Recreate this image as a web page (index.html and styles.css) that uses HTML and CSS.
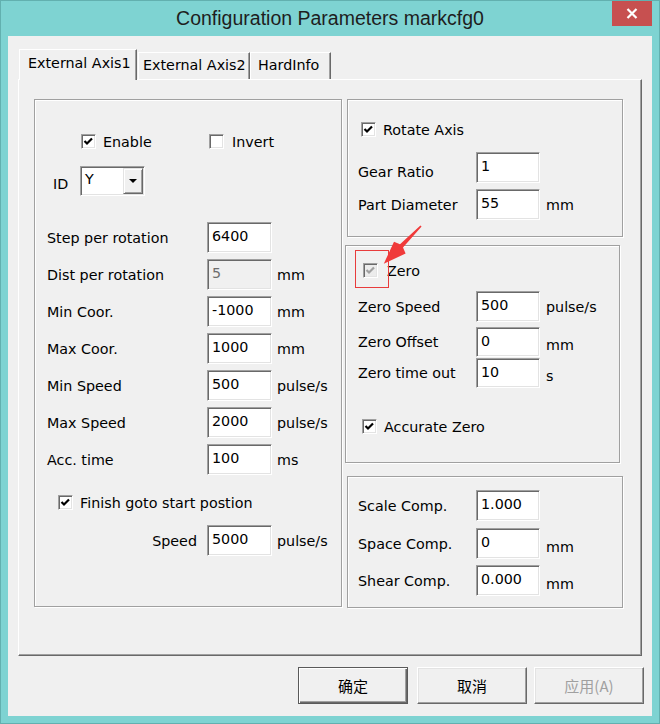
FILE: index.html
```html
<!DOCTYPE html>
<html>
<head>
<meta charset="utf-8">
<title>Configuration Parameters markcfg0</title>
<link rel="stylesheet" href="styles.css">
</head>
<body>
<div class="window">
  <div class="titlebar">
    <div class="title">Configuration Parameters markcfg0</div>
    <div class="close"><svg width="12" height="11" viewBox="0 0 12 11"><path d="M1.5 1 L10.5 10 M10.5 1 L1.5 10" stroke="#fff" stroke-width="2.2" fill="none"/></svg></div>
  </div>
  <div class="client">
    <div class="tabs">
      <div class="tab sel">External Axis1</div>
      <div class="tab t2">External Axis2</div>
      <div class="tab t3">HardInfo</div>
    </div>
    <div class="panel">
      <div class="group gleft">
        <div class="cbline">
          <div class="check w128"><span class="cb"><svg width="13" height="13" viewBox="0 0 13 13"><path d="M2.5 6 L5 8.5 L10 3.5" stroke="#000" stroke-width="2.2" fill="none"/></svg></span><span>Enable</span></div>
          <div class="check gap8"><span class="cb"></span><span>Invert</span></div>
        </div>
        <div class="idrow">
          <span class="idlbl">ID</span>
          <div class="combo"><span class="combo-val">Y</span><span class="combo-btn"><span class="tri"></span></span></div>
        </div>
        <div class="fields lf">
          <div class="row"><span class="lbl">Step per rotation</span><span class="edit">6400</span></div>
          <div class="row"><span class="lbl">Dist per rotation</span><span class="edit dis">5</span><span class="unit">mm</span></div>
          <div class="row"><span class="lbl">Min Coor.</span><span class="edit">-1000</span><span class="unit">mm</span></div>
          <div class="row"><span class="lbl">Max Coor.</span><span class="edit">1000</span><span class="unit">mm</span></div>
          <div class="row"><span class="lbl">Min Speed</span><span class="edit">500</span><span class="unit">pulse/s</span></div>
          <div class="row"><span class="lbl">Max Speed</span><span class="edit">2000</span><span class="unit">pulse/s</span></div>
          <div class="row"><span class="lbl">Acc. time</span><span class="edit">100</span><span class="unit">ms</span></div>
        </div>
        <div class="check finish"><span class="cb"><svg width="13" height="13" viewBox="0 0 13 13"><path d="M2.5 6 L5 8.5 L10 3.5" stroke="#000" stroke-width="2.2" fill="none"/></svg></span><span>Finish goto start postion</span></div>
        <div class="row speedrow"><span class="lbl">Speed</span><span class="edit">5000</span><span class="unit">pulse/s</span></div>
      </div>
      <div class="rightcol">
        <div class="group g1">
          <div class="check rot"><span class="cb"><svg width="13" height="13" viewBox="0 0 13 13"><path d="M2.5 6 L5 8.5 L10 3.5" stroke="#000" stroke-width="2.2" fill="none"/></svg></span><span>Rotate Axis</span></div>
          <div class="fields rf g1f">
            <div class="row"><span class="lbl gear">Gear Ratio</span><span class="edit">1</span></div>
            <div class="row"><span class="lbl">Part Diameter</span><span class="edit">55</span><span class="unit">mm</span></div>
          </div>
        </div>
        <div class="group g2">
          <div class="check zero"><span class="cb dis"><svg width="13" height="13" viewBox="0 0 13 13"><path d="M2.5 6 L5 8.5 L10 3.5" stroke="#a0a0a0" stroke-width="2.2" fill="none"/></svg></span><span>Zero</span></div>
          <div class="rf g2f">
            <div class="row"><span class="lbl">Zero Speed</span><span class="edit">500</span><span class="unit">pulse/s</span></div>
            <div class="row h30 mt5"><span class="lbl">Zero Offset</span><span class="edit">0</span><span class="unit low">mm</span></div>
            <div class="row h30 mt1"><span class="lbl">Zero time out</span><span class="edit">10</span><span class="unit low">s</span></div>
          </div>
          <div class="check acc"><span class="cb"><svg width="13" height="13" viewBox="0 0 13 13"><path d="M2.5 6 L5 8.5 L10 3.5" stroke="#000" stroke-width="2.2" fill="none"/></svg></span><span>Accurate Zero</span></div>
        </div>
        <div class="group g3">
          <div class="rf g3f">
            <div class="row"><span class="lbl">Scale Comp.</span><span class="edit">1.000</span></div>
            <div class="row mt7"><span class="lbl">Space Comp.</span><span class="edit">0</span><span class="unit low">mm</span></div>
            <div class="row mt6"><span class="lbl">Shear Comp.</span><span class="edit">0.000</span><span class="unit low">mm</span></div>
          </div>
        </div>
      </div>
    </div>
    <div class="buttons">
      <div class="btn default">确定</div>
      <div class="btn b2">取消</div>
      <div class="btn b3 disabled">应用(A)</div>
    </div>
  </div>
  <div class="redbox"></div>
  <svg class="arrow" width="48" height="48" viewBox="380 223 48 48"><polygon points="421.6,226.6 403,247.5 405.6,253.5 383.8,263.8 394,241.7 400,244.3 420.4,225.4" fill="#f03a3a"/></svg>
</div>
</body>
</html>
```
FILE: styles.css
```css
* { box-sizing: border-box; }
html, body { margin: 0; padding: 0; }
body {
  width: 660px; height: 724px; overflow: hidden;
  font-family: "DejaVu Sans", Verdana, sans-serif;
  font-size: 14.3px; color: #000;
}
.window {
  position: relative; width: 660px; height: 724px;
  background: #7ed3d2; border: 1px solid #62b0af;
}
.titlebar {
  height: 35px; display: grid;
  grid-template-columns: 1fr auto 1fr; align-items: center;
}
.title {
  grid-column: 2;
  font-family: "Liberation Sans", Arial, sans-serif;
  font-size: 19.5px; color: #1e1e1e;
}
.close {
  grid-column: 3; justify-self: end; align-self: start;
  width: 40px; height: 25px; margin-right: 7px;
  background: #c75050;
  display: flex; align-items: center; justify-content: center;
}
.client {
  margin-left: 7px; width: 644px; height: 680px;
  background: #f0f0f0; padding-top: 13px;
}
.tabs {
  display: flex; align-items: flex-end; height: 30px; padding-left: 11px;
}
.tab {
  background: #f0f0f0;
  border-left: 1px solid #fff; border-top: 1px solid #fff;
  border-right: 1px solid #696969;
  box-shadow: inset -1px 0 #a0a0a0;
  line-height: 19px; white-space: nowrap;
}
.tab.sel {
  position: relative; z-index: 1;
  width: 118px; height: 31px; margin-bottom: -1px;
  padding: 4px 0 0 8px;
}
.tab.t2 { width: 112px; height: 27px; padding: 3px 0 0 4px; margin-left: 1px; }
.tab.t3 { width: 81px; height: 27px; padding: 3px 0 0 7px; }
.panel {
  margin-left: 10px; width: 624px; height: 577px;
  border: 1px solid; border-color: #fff #696969 #696969 #fff;
  box-shadow: inset -1px -1px #a0a0a0;
  display: flex; gap: 5px; padding: 19px 0 0 15px;
}
.group {
  border: 1px solid #a0a0a0;
  box-shadow: inset 1px 1px #fff, 1px 1px #fff;
  display: flex; flex-direction: column;
}
.gleft { width: 308px; height: 508px; }
.rightcol { width: 276px; display: flex; flex-direction: column; }
.g1 { height: 138px; }
.g2 { height: 218px; margin: 8px 3px 0 -2px; }
.g3 { height: 132px; margin-top: 13px; }

.check { display: flex; align-items: center; gap: 7px; height: 15px; white-space: nowrap; }
.check.gap8 { gap: 8px; }
.w128 { width: 128px; }
.cb {
  width: 15px; height: 15px; flex: none;
  background: #fff;
  border: 1px solid; border-color: #a0a0a0 #fff #fff #a0a0a0;
  box-shadow: inset 1px 1px #696969, inset -1px -1px #e3e3e3;
  display: flex; align-items: center; justify-content: center;
}
.cb.dis { background: #ececec; }
.cb svg { display: block; }

.gleft .cbline { margin: 34px 0 0 46px; height: 15px; display: flex; align-items: center; }
.idrow { margin: 17px 0 0 18px; display: flex; align-items: center; height: 30px; }
.idlbl { width: 27px; padding-top: 5px; }
.combo {
  width: 65px; height: 30px; background: #fff;
  border: 1px solid; border-color: #a0a0a0 #fff #fff #a0a0a0;
  box-shadow: inset 1px 1px #696969, inset -1px -1px #e3e3e3;
  padding: 1px; display: flex;
}
.combo-val { flex: 1; padding: 2px 0 0 3px; line-height: 18px; }
.combo-btn {
  width: 20px; height: 26px; background: #f0f0f0;
  border: 1px solid; border-color: #e3e3e3 #696969 #696969 #e3e3e3;
  box-shadow: inset 1px 1px #fff, inset -1px -1px #a0a0a0;
  display: flex; align-items: center; justify-content: center;
}
.tri {
  width: 0; height: 0;
  border-left: 4px solid transparent; border-right: 4px solid transparent;
  border-top: 4px solid #000;
}

.fields { display: flex; flex-direction: column; gap: 6px; }
.lf { margin: 26px 0 0 12px; }
.row { display: flex; align-items: center; height: 31px; white-space: nowrap; }
.row.h30 { height: 30px; }
.lf .lbl, .speedrow .lbl { width: 160px; }
.edit {
  width: 65px; height: 100%; background: #fff;
  border: 1px solid; border-color: #a0a0a0 #fff #fff #a0a0a0;
  box-shadow: inset 1px 1px #696969, inset -1px -1px #e3e3e3;
  padding-left: 4px; line-height: 26px;
}
.edit.dis { background: #f0f0f0; color: #6d6d6d; }
.unit { margin-left: 5px; }
.unit.low { padding-top: 6px; }
.finish { margin: 20px 0 0 23px; }
.speedrow { margin: 15px 0 0 12px; }
.speedrow .lbl { text-align: right; padding-right: 10px; }

.rf .lbl { width: 118px; }
.rf .edit { width: 64px; }
.rf .unit { margin-left: 6px; }
.rot { margin: 22px 0 0 13px; }
.g1f { margin: 15px 0 0 10px; }
.gear { padding-top: 9px; }
.zero { margin: 17px 0 0 17px; gap: 9px; }
.g2f { margin: 13px 0 0 12px; display: flex; flex-direction: column; }
.mt5 { margin-top: 5px; }
.mt1 { margin-top: 1px; }
.mt7 { margin-top: 7px; }
.mt6 { margin-top: 6px; }
.acc { margin: 31px 0 0 16px; }
.g3f { margin: 13px 0 0 10px; display: flex; flex-direction: column; }

.buttons { display: flex; justify-content: flex-end; padding-right: 8px; margin-top: 11px; }
.btn {
  width: 110px; height: 37px; background: #f0f0f0;
  border: 1px solid; border-color: #fff #696969 #696969 #fff;
  box-shadow: inset -1px -1px #a0a0a0, inset 1px 1px #e3e3e3;
  display: flex; align-items: center; justify-content: center;
  font-family: "Noto Sans CJK SC", "Noto Sans", sans-serif; font-size: 15px;
}
.btn.default {
  border: 1px solid #5a5a5a;
  box-shadow: inset 1px 1px #fff, inset -1px -1px #696969, inset -2px -2px #a0a0a0;
}
.btn.b2 { margin-left: 9px; }
.btn.b3 { margin-left: 7px; }
.btn.disabled { color: #a0a0a0; }

.redbox {
  position: absolute; left: 354px; top: 249px;
  width: 34px; height: 38px; border: 1px solid #e83c3c;
}
.arrow { position: absolute; left: 379px; top: 222px; }
```
